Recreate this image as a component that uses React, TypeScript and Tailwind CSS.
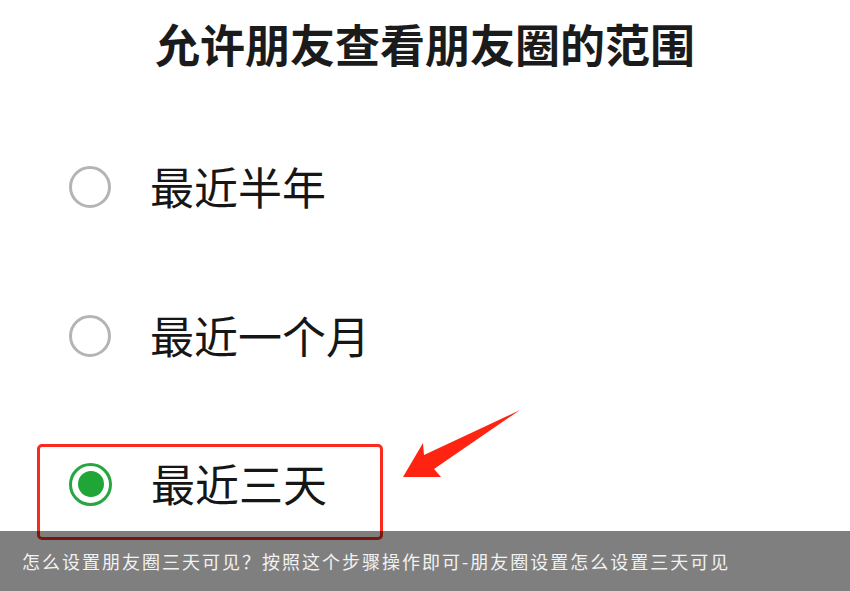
// Moments visibility picker — "最近三天" chosen, with a callout box and arrow

import React from 'react';

const CJK = "font-['Noto_Sans_CJK_SC','Noto_Sans',sans-serif]";

interface Option { label: string; checked?: boolean; }

const OPTIONS: Option[] = [
  { label: '最近半年' },
  { label: '最近一个月' },
  { label: '最近三天', checked: true },
];

function Radio({ checked }: { checked?: boolean }) {
  if (checked) {
    return (
      <span className="flex h-[43px] w-[43px] shrink-0 items-center justify-center rounded-full border-[3px] border-[#27a540]">
        <span className="h-[26px] w-[26px] rounded-full bg-[#1fa637]" />
      </span>
    );
  }
  return <span className="h-[42px] w-[42px] shrink-0 rounded-full border-[3px] border-[#b4b4b4]" />;
}

function OptionRow({ opt }: { opt: Option }) {
  return (
    <div className="flex h-[44px] items-center gap-[39px]">
      <Radio checked={opt.checked} />
      <span className="-mt-[3px] text-[44px] leading-none text-[#161616]">{opt.label}</span>
    </div>
  );
}

export default function App() {
  return (
    <div className={`relative h-[591px] w-[850px] overflow-hidden bg-white ${CJK}`}>
      <h1 className="pt-[18px] text-center text-[45px] font-bold leading-[52px] text-[#1b1b1b]">
        允许朋友查看朋友圈的范围
      </h1>

      <div className="mt-[95px] ml-[69px]">
        <OptionRow opt={OPTIONS[0]} />
      </div>
      <div className="mt-[105px] ml-[69px]">
        <OptionRow opt={OPTIONS[1]} />
      </div>

      {/* highlighted choice */}
      <div className="mt-[86px] ml-[37px] h-[96px] w-[346px] rounded-[5px] border-[3px] border-[#fb2a1e] pl-[29px] pt-[15px]">
        <OptionRow opt={OPTIONS[2]} />
      </div>

      <svg className="absolute left-0 top-0" width="850" height="591" viewBox="0 0 850 591">
        <polygon points="403,477 423,443 424,455 520,410 434,469 441,477" fill="#ff2412" />
      </svg>

      <div className="absolute bottom-0 left-0 flex h-[60px] w-full items-center bg-black/50 pl-[22px]">
        <span className="text-[18px] leading-none tracking-[2px] text-[#f2f2f2]">
          怎么设置朋友圈三天可见？按照这个步骤操作即可-朋友圈设置怎么设置三天可见
        </span>
      </div>
    </div>
  );
}
